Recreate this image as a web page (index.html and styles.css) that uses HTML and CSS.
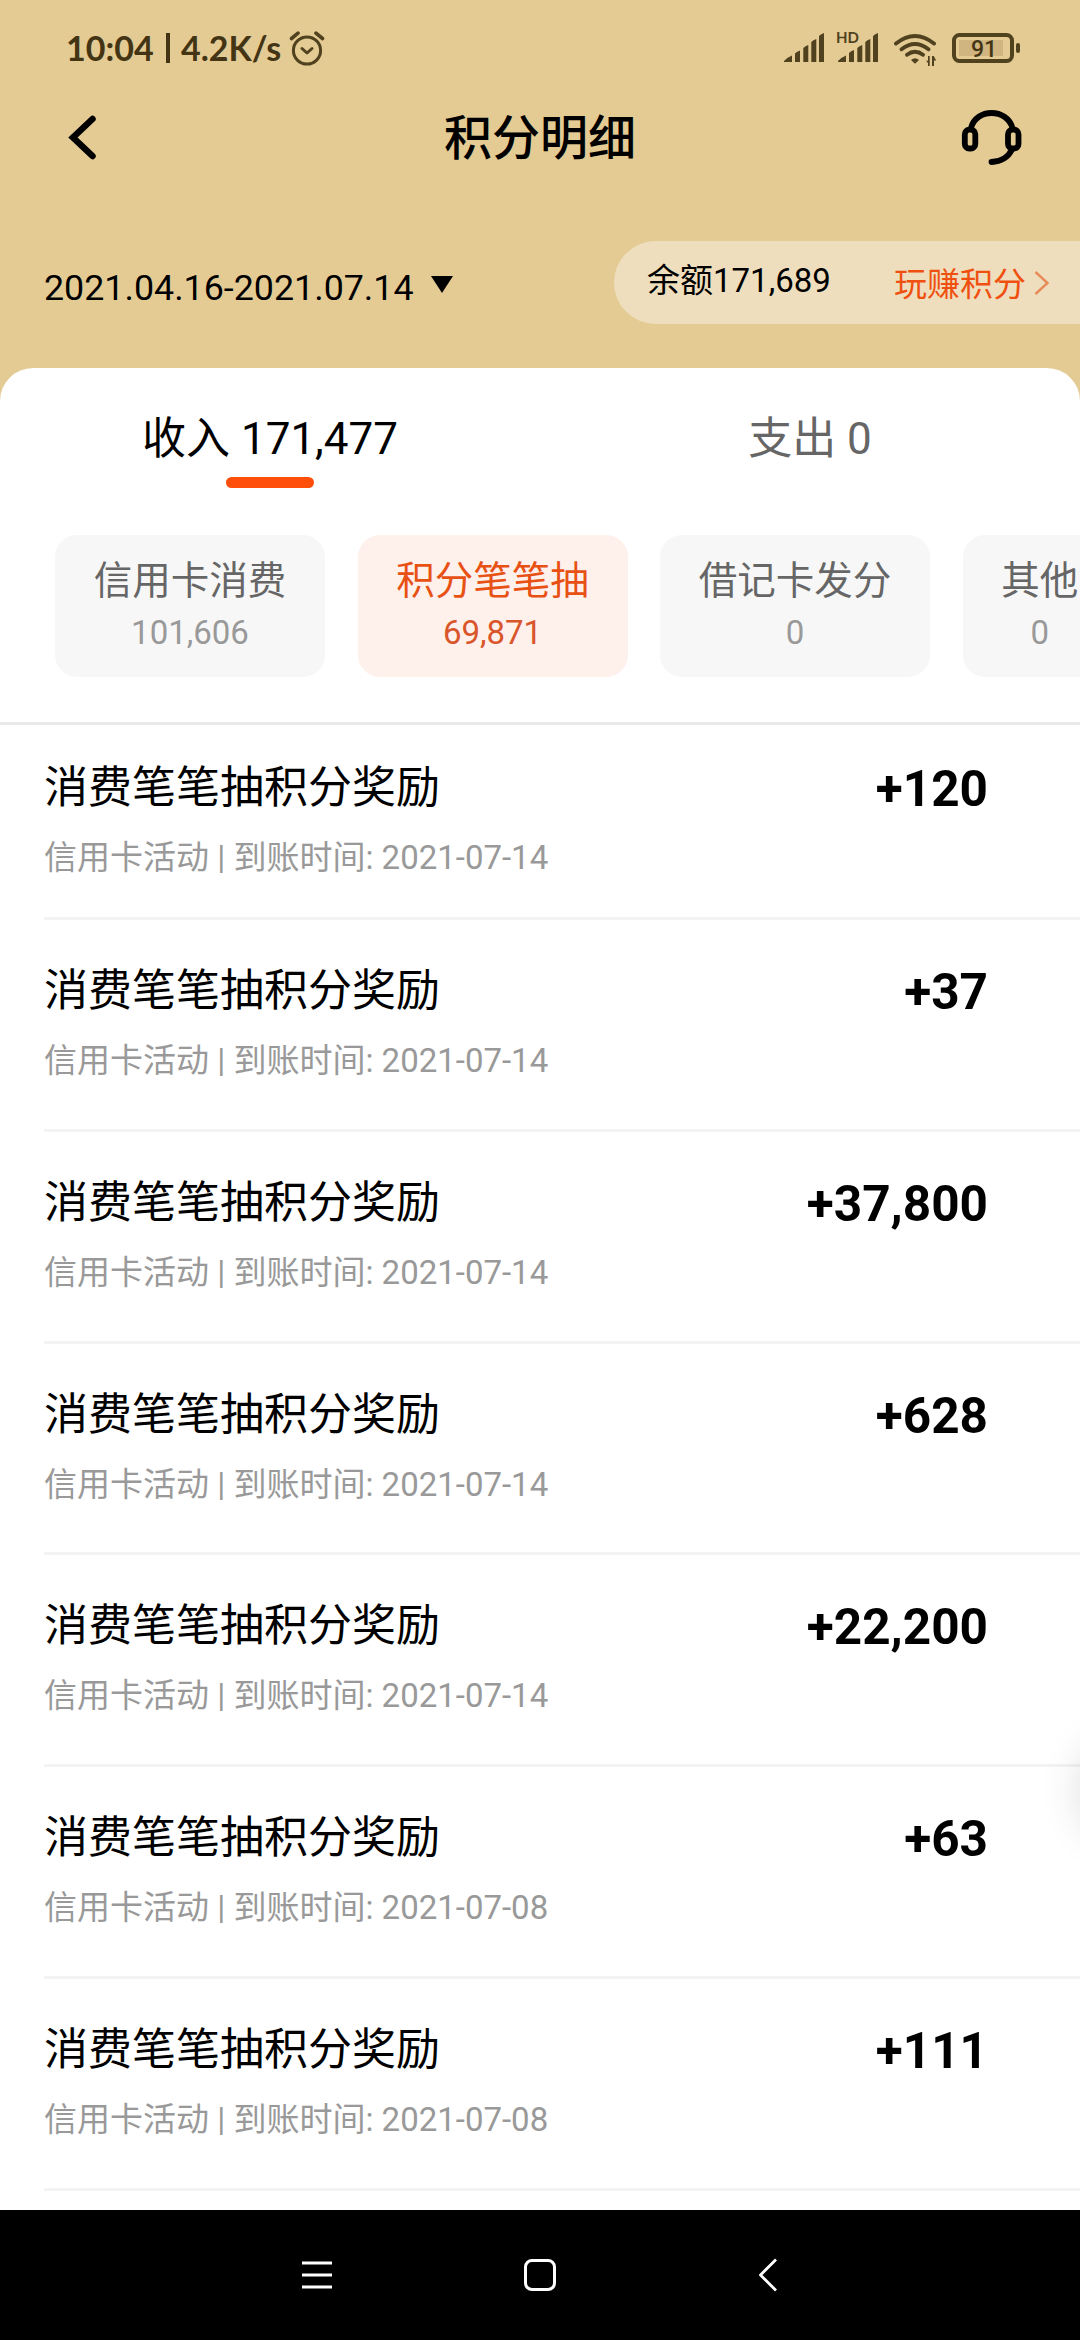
FILE: index.html
```html
<!DOCTYPE html>
<html lang="zh-CN">
<head>
<meta charset="utf-8">
<title>积分明细</title>
<link rel="stylesheet" href="styles.css">
</head>
<body>
<div class="screen">
  <div class="statusbar">
    <div class="status-left">
      <span class="clock">10:04</span><span class="bar"></span><span class="speed">4.2K/s</span>
      <svg class="alarm" width="36" height="36" viewBox="0 0 36 36" fill="none" stroke="#51421f" stroke-width="3" stroke-linecap="round" stroke-linejoin="round"><circle cx="18" cy="20.5" r="13.6"/><path d="M13 18.500l5 4.500 5-4.500"/><path d="M2.500 8.500L9 3.200M33.500 8.500L27 3.200" stroke-width="3.600"/></svg>
    </div>
    <div class="status-right">
      <svg width="240" height="40" viewBox="784 28 240 40" fill="#51421f">
        <path d="M784 62v-1q4-4 8-5.500V62zM795 62V53.500q2-2 5-3V62zM803.300 62V48q2-2 5-3V62zM811.300 62V42q2-2 5-3V62zM819 62V36q2-2 5-3V62z"/>
        <path d="M838 62v-1q4-4 8-5.500V62zM849 62V53q2-2 5-3V62zM857.300 62V48q2-2 5-3V62zM865.300 62V42q2-2 5-3V62zM873 62V36q2-2 5-3V62z"/>
        <text class="hd" x="836" y="43">HD</text>
        <g fill="none" stroke="#51421f" stroke-width="3.900" stroke-linecap="round"><path d="M896 43.500q19-15 38 0"/><path d="M901.500 49.200q13.500-10.500 27 0"/><path d="M907 54.800q8-6 16 0"/></g>
        <path d="M911 60q4-3.500 8 0l-4 3.700z"/>
        <path d="M929.700 56v10h-1.700v-3l-2-2.200h2V56zM932 66V56h1.700l2.500 4.500h-2.200V66z"/>
        <rect x="959" y="40" width="44" height="16" fill="#d0b581"/>
        <rect x="954" y="35" width="58" height="26" rx="5.500" fill="none" stroke="#51421f" stroke-width="4"/>
        <rect x="1016" y="43" width="4" height="10" rx="2"/>
        <text class="batt" x="984" y="57" text-anchor="middle">91</text>
      </svg>
    </div>
  </div>
  <header class="navbar">
    <svg class="back" width="30" height="46" viewBox="0 0 30 46" fill="none" stroke="#000" stroke-width="6.500" stroke-linecap="round"><path d="M24.500 4L5 22.500l19.500 18.500"/></svg>
    <h1>积分明细</h1>
    <svg class="service" width="62" height="58" viewBox="961 108 62 58" fill="none" stroke="#000" stroke-width="5.800" stroke-linecap="round"><path d="M971 127c5-20 36-20 41.500 0M1012 148.500q-6 12-20.500 12.500"/><rect x="964.800" y="128.700" width="10.500" height="18.800" rx="4.500"/><rect x="1008" y="128.700" width="10.500" height="18.800" rx="4.500"/></svg>
  </header>
  <div class="filter">
    <div class="range"><span>2021.04.16-2021.07.14</span><i class="caret"></i></div>
    <div class="balance">
      <span class="total">余额171,689</span>
      <a class="earn">玩赚积分</a>
      <svg width="16" height="26" viewBox="0 0 16 26" fill="none" stroke="#e88b58" stroke-width="2.400"><path d="M1.500 2L13.500 13 1.500 24"/></svg>
    </div>
  </div>
  <main class="sheet">
    <div class="tabs">
      <div class="tab active">收入 171,477</div>
      <div class="tab">支出 0</div>
    </div>
    <div class="chips">
      <div class="chip"><b>信用卡消费</b><span>101,606</span></div>
      <div class="chip selected"><b>积分笔笔抽</b><span>69,871</span></div>
      <div class="chip"><b>借记卡发分</b><span>0</span></div>
      <div class="chip"><b>其他</b><span>0</span></div>
    </div>
    <ul class="list">
      <li><div><h2>消费笔笔抽积分奖励</h2><p>信用卡活动 | 到账时间: 2021-07-14</p></div><strong>+120</strong></li>
      <li><div><h2>消费笔笔抽积分奖励</h2><p>信用卡活动 | 到账时间: 2021-07-14</p></div><strong>+37</strong></li>
      <li><div><h2>消费笔笔抽积分奖励</h2><p>信用卡活动 | 到账时间: 2021-07-14</p></div><strong>+37,800</strong></li>
      <li><div><h2>消费笔笔抽积分奖励</h2><p>信用卡活动 | 到账时间: 2021-07-14</p></div><strong>+628</strong></li>
      <li><div><h2>消费笔笔抽积分奖励</h2><p>信用卡活动 | 到账时间: 2021-07-14</p></div><strong>+22,200</strong></li>
      <li><div><h2>消费笔笔抽积分奖励</h2><p>信用卡活动 | 到账时间: 2021-07-08</p></div><strong>+63</strong></li>
      <li><div><h2>消费笔笔抽积分奖励</h2><p>信用卡活动 | 到账时间: 2021-07-08</p></div><strong>+111</strong></li>
    </ul>
  </main>
  <nav class="sysnav">
    <svg width="30" height="32" viewBox="0 0 30 32" stroke="#fff" stroke-width="3"><path d="M0 4h30M0 16h30M0 28h30"/></svg>
    <svg width="32" height="32" viewBox="0 0 32 32" fill="none" stroke="#fff" stroke-width="3"><rect x="1.500" y="1.500" width="29" height="29" rx="6.500"/></svg>
    <svg width="20" height="34" viewBox="0 0 20 34" fill="none" stroke="#fff" stroke-width="2.800" stroke-linejoin="round"><path d="M18 1.500L2.500 17 18 32.500"/></svg>
  </nav>
  <div class="float-shadow"></div>
</div>
</body>
</html>
```
FILE: styles.css
```css
* { box-sizing: border-box; margin: 0; padding: 0; }
body {
  width: 1080px;
  font-family: Roboto, "Noto Sans CJK SC", sans-serif;
  color: #000;
  background: #e4cb94;
}
svg { display: block; flex: none; }
.screen {
  position: relative;
  display: flex;
  flex-direction: column;
  width: 1080px;
  height: 2340px;
  overflow: hidden;
  background: #e4cb94;
}
.statusbar {
  display: flex;
  justify-content: space-between;
  height: 96px;
  padding: 0 56px 0 66px;
}
.status-left {
  display: flex;
  align-items: center;
  height: 96px;
  color: #433414;
  font: 700 34px/40px Lato, sans-serif;
}
.clock { width: 90px; }
.bar { width: 4px; height: 30px; margin: 0 11px 0 10px; background: #433414; }
.speed { width: 108px; }
.status-right { padding-top: 28px; }
.hd { font: 700 15px Lato, sans-serif; }
.batt { font: 500 23px Roboto, sans-serif; fill: #433414; }
.navbar {
  display: grid;
  grid-template-columns: 1fr auto 1fr;
  align-items: center;
  height: 83px;
  padding: 0 57px 0 68px;
}
.navbar h1 { font-size: 48px; font-weight: 500; line-height: 60px; padding: 3px 11px 0 0; }
.service { justify-self: end; }
.filter {
  display: flex;
  justify-content: space-between;
  align-items: flex-start;
  height: 189px;
  padding-top: 62px;
}
.range {
  display: flex;
  align-items: center;
  gap: 17px;
  padding: 23px 0 0 44px;
  font-size: 35.800px;
  line-height: 48px;
}
.caret {
  margin-bottom: 7px;
  border: 11px solid transparent;
  border-top: 17px solid #000;
  border-bottom: 0;
}
.balance {
  display: flex;
  align-items: center;
  width: 466px;
  height: 83px;
  padding-left: 33px;
  border-radius: 42px 0 0 42px;
  background: #eedebd;
  font-size: 33px;
  line-height: 44px;
}
.total { width: 247px; padding-bottom: 4px; }
.earn { width: 140px; padding-top: 4px; color: #f0500f; }
.sheet {
  flex: 1;
  min-height: 0;
  overflow: hidden;
  border-radius: 33px 33px 0 0;
  background: #fff;
}
.tabs { display: flex; height: 167px; }
.tab {
  flex: 1;
  display: flex;
  flex-direction: column;
  align-items: center;
  padding-top: 41px;
  font-size: 44px;
  line-height: 60px;
  color: #666;
}
.tab.active { color: #000; }
.tab.active::after {
  content: "";
  width: 88px;
  height: 11px;
  margin-top: 8px;
  border-radius: 6px;
  background: #ff4d0a;
}
.chips {
  display: flex;
  gap: 32.500px;
  height: 190px;
  padding-left: 55px;
  overflow: hidden;
  border-bottom: 3px solid #e9e9e9;
}
.chip {
  flex: none;
  height: 142px;
  padding: 20px 38.750px 0;
  border-radius: 22px;
  background: #f7f7f7;
  text-align: center;
  color: #666;
}
.chip b { display: block; font-size: 38.500px; font-weight: 400; line-height: 52px; }
.chip span { display: block; font-size: 33px; line-height: 52px; color: #999; }
.chip.selected { background: #fef0eb; color: #e85114; }
.chip.selected span { color: #d9552a; }
.list { list-style: none; padding-left: 44px; }
.list li {
  display: flex;
  justify-content: space-between;
  height: 211.800px;
  padding: 41px 92px 0 0;
  border-bottom: 3px solid #f3f3f3;
}
.list li:first-child { height: 195px; padding-top: 33px; }
.list h2 { font-size: 44px; font-weight: 400; line-height: 60px; }
.list p { margin-top: 16px; font-size: 33px; line-height: 48px; color: #999; }
.list strong { font-size: 49.500px; font-weight: 700; line-height: 62px; }
.sysnav {
  display: grid;
  grid-template-columns: 1fr auto 1fr;
  align-items: center;
  height: 130px;
  padding: 0 302px;
  background: #000;
}
.sysnav svg:last-child { justify-self: end; }
.float-shadow {
  position: absolute;
  left: 1084px;
  top: 1740px;
  width: 100px;
  height: 100px;
  border-radius: 50%;
  box-shadow: 0 0 44px 2px rgba(0, 0, 0, 0.160);
}
```
